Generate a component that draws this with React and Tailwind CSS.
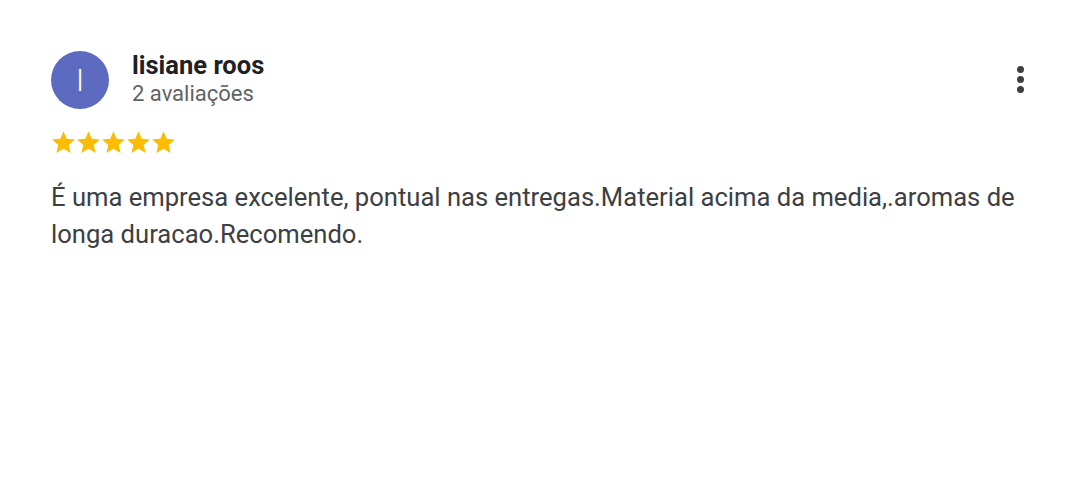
import React from "react";

function Star() {
  return (
    <svg width="25" height="24" viewBox="0 0 24 23">
      <path fill="#fbbc04" d="M12 0.3l3.1 7.2 7.8.7-5.9 5.2 1.8 7.7L12 17.1l-6.8 4 1.8-7.7-5.9-5.2 7.8-.7z" />
    </svg>
  );
}

export default function App() {
  return (
    <div className="w-[1080px] h-[500px] bg-white" style={{ fontFamily: "Roboto, 'Liberation Sans', sans-serif" }}>
      <div className="pl-[51px] pr-[50px] pt-[51px]">
        <div className="flex items-start">
          <div className="w-[58px] h-[58px] rounded-full bg-[#5c6bc0] flex items-center justify-center text-white text-[32px] font-light leading-none">I</div>
          <div className="ml-[23px] flex flex-col">
            <div className="text-[25.5px] font-bold text-[#202124] leading-[30px] -mt-[1px]">lisiane roos</div>
            <div className="text-[22px] text-[#5f6368] leading-[27px]">2 avaliações</div>
          </div>
          <div className="ml-auto mt-[15px] mr-[6px] flex flex-col items-center gap-[3px]">
            <span className="w-[7px] h-[7px] rounded-full bg-[#3c4043]"></span>
            <span className="w-[7px] h-[7px] rounded-full bg-[#3c4043]"></span>
            <span className="w-[7px] h-[7px] rounded-full bg-[#3c4043]"></span>
          </div>
        </div>
        <div className="flex items-center mt-[22px] gap-0">
          <Star /><Star /><Star /><Star /><Star />
        </div>
        <div className="mt-[24px] text-[25.6px] leading-[37px] text-[#3c4043] w-[980px]">
          É uma empresa excelente, pontual nas entregas.Material acima da media,.aromas de longa duracao.Recomendo.
        </div>
      </div>
    </div>
  );
}
